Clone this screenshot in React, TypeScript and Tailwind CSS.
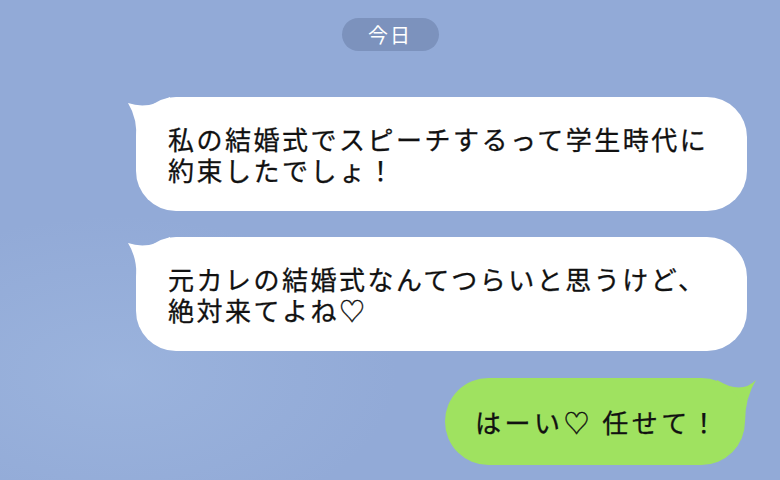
import React from "react";

const jp = "font-['Noto_Sans_CJK_JP','Noto_Sans',sans-serif]";

function LeftTail() {
  return (
    <svg
      className="absolute left-[-10px] top-0"
      width="50"
      height="44"
      viewBox="0 0 50 44"
    >
      <path d="M2 6 Q22 13 44 0 L44 44 L10 44 Q12 22 2 6 Z" fill="#ffffff" />
    </svg>
  );
}

function RightTail() {
  return (
    <svg
      className="absolute right-[-14px] top-0"
      width="50"
      height="44"
      viewBox="0 0 50 44"
    >
      <path d="M47 2 Q32 17 8 2 L6 44 L36 44 Q36 20 47 2 Z" fill="#9fe260" />
    </svg>
  );
}

function IncomingBubble({ lines }: { lines: string[] }) {
  return (
    <div className="relative ml-[136px] w-[611px]">
      <LeftTail />
      <div className="relative rounded-[40px] bg-white pl-[32px] py-[26px] text-[26px] leading-[31px] tracking-[2.5px] text-[#111] whitespace-nowrap [-webkit-text-stroke:0.3px_#111]">
        {lines.map((l, i) => (
          <div key={i}>{l}</div>
        ))}
      </div>
    </div>
  );
}

export default function App() {
  return (
    <div
      className={`${jp} w-full h-[480px] overflow-hidden bg-[#92aad7] bg-[radial-gradient(ellipse_at_15%_78%,rgba(165,190,228,0.45),transparent_30%)] flex flex-col`}
    >
      <div className="flex justify-center pt-[18px]">
        <div className="w-[97px] h-[33px] rounded-full bg-[#7c92bd] text-white text-[20px] tracking-[2px] flex items-center justify-center">
          今日
        </div>
      </div>

      <div className="mt-[46px]">
        <IncomingBubble
          lines={["私の結婚式でスピーチするって学生時代に", "約束したでしょ！"]}
        />
      </div>

      <div className="mt-[26px]">
        <IncomingBubble
          lines={["元カレの結婚式なんてつらいと思うけど、", "絶対来てよね♡"]}
        />
      </div>

      <div className="mt-[27px] flex justify-end pr-[35px]">
        <div className="relative w-[300px]">
          <RightTail />
          <div className="relative h-[87px] rounded-[44px] bg-[#9fe260] pl-[30px] flex items-center text-[26px] tracking-[3.5px] text-[#111] whitespace-nowrap [-webkit-text-stroke:0.3px_#111]">
            はーい♡ 任せて！
          </div>
        </div>
      </div>
    </div>
  );
}
